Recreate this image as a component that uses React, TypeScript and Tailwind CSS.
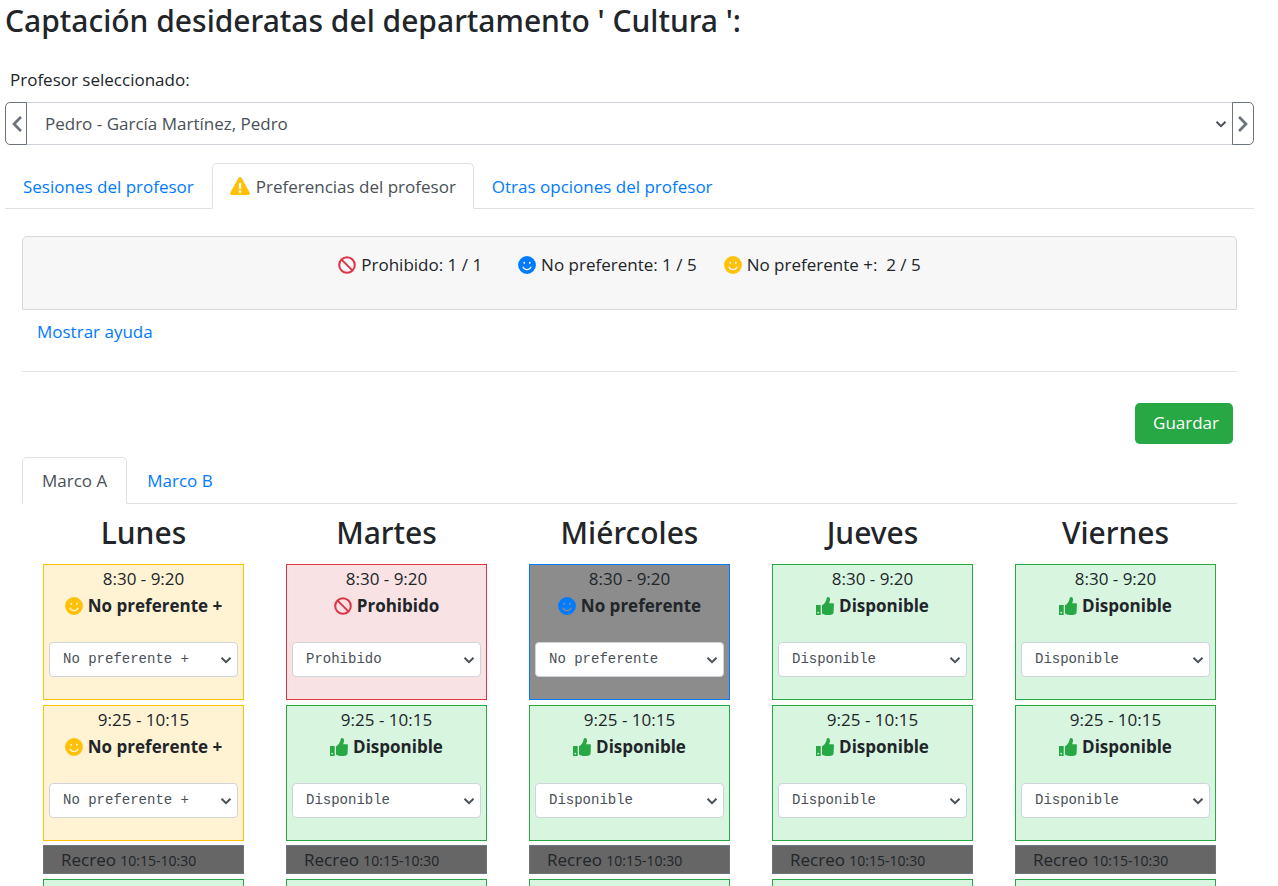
import React, { useState } from 'react';
import { FaChevronLeft, FaChevronRight } from 'react-icons/fa';

type Status = 'Disponible' | 'No preferente' | 'No preferente +' | 'Prohibido';

const STATUSES: Status[] = ['Disponible', 'No preferente', 'No preferente +', 'Prohibido'];

const CARD_STYLE: Record<Status, string> = {
  Disponible: 'border-[#28a745] bg-[#d8f5df]',
  'No preferente': 'border-[#007bff] bg-[#8c8c8c]',
  'No preferente +': 'border-[#ffc107] bg-[#fff3d4]',
  Prohibido: 'border-[#dc3545] bg-[#f9e2e4]',
};

function BanIcon() {
  return (
    <svg viewBox="0 0 18 18" className="inline size-[18px] shrink-0 text-[#dc3545]" fill="none" stroke="currentColor" strokeWidth="2" aria-hidden="true">
      <circle cx="9" cy="9" r="7.8" />
      <path d="M3.6 3.6 14.4 14.4" />
    </svg>
  );
}

function SmileIcon({ className }: { className: string }) {
  return (
    <svg viewBox="0 0 18 18" className={`inline size-[18px] shrink-0 ${className}`} fill="currentColor" fillRule="evenodd" aria-hidden="true">
      <path d="M9 .1a8.900 8.900 0 1 0 0 17.800A8.900 8.900 0 0 0 9 .1zM6.200 5.700a.9 1.100 0 1 1 0 2.200.9 1.100 0 0 1 0-2.200zM11.800 5.700a.9 1.100 0 1 1 0 2.200.9 1.100 0 0 1 0-2.200zM4.700 10.700c.3-.3.8-.2 1 .2.700 1.300 1.900 2 3.300 2s2.600-.7 3.300-2c.2-.4.7-.5 1-.2.3.2.3.5.2.8-.9 1.700-2.500 2.700-4.500 2.700s-3.600-1-4.500-2.700c-.1-.3-.1-.6.2-.8z" />
    </svg>
  );
}

function ThumbIcon() {
  return (
    <svg viewBox="0 0 18 18" className="inline size-[18px] shrink-0 text-[#28a745]" fill="currentColor" fillRule="evenodd" aria-hidden="true">
      <path d="M0 8h4.700v10H0zM2.200 14.700a.9.9 0 1 0 0 1.800.9.9 0 0 0 0-1.800z" />
      <path d="M6 8.300c1.600-.8 3.700-3.300 4.300-5.400.2-1.200.4-2.900 1.700-2.900 1.500 0 2.200 1.500 2 3-.1 1.200-.6 2.200-.9 3.200H16.600c1 0 1.600.8 1.300 1.800l-.3 7c-.1 1.700-1.100 2.700-2.600 2.800-3.500.4-6.500.2-9-1.300z" />
    </svg>
  );
}

function WarningIcon() {
  return (
    <svg viewBox="0 0 20 18" className="inline h-[18px] w-5 shrink-0" aria-hidden="true">
      <path d="M8.300 1.200c.8-1.500 2.700-1.500 3.500 0l7.900 14.200c.6 1.200 0 2.600-1.300 2.600H1.600C.3 18-.3 16.600.3 15.400z" fill="#ffc107" />
      <path d="M8.900 6h2.300v5.700H8.900zM8.900 13.300h2.300v2.400H8.900z" fill="#fff" />
    </svg>
  );
}

function SelectArrow() {
  return (
    <svg viewBox="0 0 12 8" className="pointer-events-none absolute right-[6px] top-1/2 h-2 w-3 -translate-y-1/2 text-[#495057]" fill="none" stroke="currentColor" strokeWidth="2" aria-hidden="true">
      <path d="M1.500 1.800 6 6.200l4.500-4.400" />
    </svg>
  );
}

function StatusIcon({ status }: { status: Status }) {
  if (status === 'Disponible') return <ThumbIcon />;
  if (status === 'Prohibido') return <BanIcon />;
  return <SmileIcon className={status === 'No preferente' ? 'text-[#007bff]' : 'text-[#ffc107]'} />;
}

function SlotCard({ day, time, initial }: { day: string; time: string; initial: Status }) {
  const [status, setStatus] = useState<Status>(initial);
  return (
    <div className={`h-[136px] border px-[5px] ${CARD_STYLE[status]}`}>
      <p>{time}</p>
      <p className="flex items-center justify-center gap-[5px] font-bold">
        <StatusIcon status={status} />
        {status}
      </p>
      <div className="relative mt-[23px]">
        <select
          aria-label={`${day} ${time}`}
          value={status}
          onChange={(e) => setStatus(e.target.value as Status)}
          className="block h-[35px] w-full appearance-none rounded-[4px] border border-[#ced4da] bg-white pl-[13px] pr-6 font-['Liberation_Mono',monospace] text-[14px] text-[#495057]"
        >
          {STATUSES.map((s) => (
            <option key={s}>{s}</option>
          ))}
        </select>
        <SelectArrow />
      </div>
    </div>
  );
}

const DAYS: { name: string; slots: [Status, Status] }[] = [
  { name: 'Lunes', slots: ['No preferente +', 'No preferente +'] },
  { name: 'Martes', slots: ['Prohibido', 'Disponible'] },
  { name: 'Miércoles', slots: ['No preferente', 'Disponible'] },
  { name: 'Jueves', slots: ['Disponible', 'Disponible'] },
  { name: 'Viernes', slots: ['Disponible', 'Disponible'] },
];

const TAB = '-mb-px rounded-t-[5px] border flex items-center gap-1.5';
const TAB_MAIN = 'h-[46px] px-[17px]';
const TAB_SUB = 'h-[47px] px-[19px]';
const TAB_ON = 'border-[#dee2e6] border-b-white bg-white text-[#495057]';
const TAB_OFF = 'border-transparent text-[#007bff]';

export default function App() {
  return (
    <main className="h-screen overflow-hidden bg-white pl-[5px] pr-6 font-['Open_Sans','Noto_Sans',sans-serif] text-[17px] leading-[27px] text-[#212529]">
      <h1 className="font-['Noto_Sans',sans-serif] text-[30px] font-medium leading-[42px]">Captación desideratas del departamento ' Cultura ':</h1>
      <label htmlFor="profesor" className="mt-6 block pl-[5px]">Profesor seleccionado:</label>
      <div className="mt-[9px] flex h-[43px]">
        <button aria-label="Profesor anterior" className="z-10 -mr-px flex w-[22px] items-center justify-center rounded-l-[5px] border border-[#6c757d] pl-0.5 text-[#6c757d]">
          <FaChevronLeft className="size-[18px] shrink-0" />
        </button>
        <div className="relative min-w-0 flex-1">
          <select id="profesor" className="h-full w-full appearance-none border border-[#ced4da] bg-white pl-[18px] pr-8 text-[#495057]">
            <option>Pedro - García Martínez, Pedro</option>
          </select>
          <SelectArrow />
        </div>
        <button aria-label="Profesor siguiente" className="z-10 -ml-px flex w-[22px] items-center justify-center rounded-r-[5px] border border-[#6c757d] text-[#6c757d]">
          <FaChevronRight className="size-[18px] shrink-0" />
        </button>
      </div>

      <nav className="mt-[18px] flex border-b border-[#dee2e6]">
        <a href="#sesiones" className={`${TAB} ${TAB_MAIN} ${TAB_OFF}`}>Sesiones del profesor</a>
        <a href="#preferencias" className={`${TAB} ${TAB_MAIN} ${TAB_ON}`}>
          <WarningIcon />
          Preferencias del profesor
        </a>
        <a href="#otras" className={`${TAB} ${TAB_MAIN} ${TAB_OFF}`}>Otras opciones del profesor</a>
      </nav>

      <section className="ml-[17px] mr-[17px] mt-[27px]">
        <div className="flex h-[74px] justify-center rounded-t-[5px] border border-[#d8d8d8] bg-[#f7f7f7] pt-[14px]">
          <span className="mr-9 flex h-[27px] items-center gap-[5px]"><BanIcon />Prohibido: 1 / 1</span>
          <span className="mr-[27px] flex h-[27px] items-center gap-[5px]"><SmileIcon className="text-[#007bff]" />No preferente: 1 / 5</span>
          <span className="flex h-[27px] items-center gap-[5px] whitespace-pre"><SmileIcon className="text-[#ffc107]" />{'No preferente +:  2 / 5'}</span>
        </div>
        <a href="#ayuda" className="ml-[15px] mt-2 inline-block text-[#007bff]">Mostrar ayuda</a>
        <hr className="mt-[26px] border-[#e5e5e5]" />
        <div className="mr-1 mt-[31px] flex justify-end">
          <button className="h-[41px] rounded-[5px] bg-[#28a745] pb-0.5 pl-[18px] pr-[14px] text-white">Guardar</button>
        </div>

        <nav className="mt-[13px] flex border-b border-[#dee2e6]">
          <a href="#marco-a" className={`${TAB} ${TAB_SUB} ${TAB_ON}`}>Marco A</a>
          <a href="#marco-b" className={`${TAB} ${TAB_SUB} ${TAB_OFF}`}>Marco B</a>
        </nav>

        <div className="grid grid-cols-5 text-center">
          {DAYS.map((day) => (
            <section key={day.name} className="px-[21px]">
              <h2 className="mb-2.5 mt-2 font-['Noto_Sans',sans-serif] text-[30px] font-medium leading-[42px]">{day.name}</h2>
              <div className="space-y-[5px]">
                <SlotCard day={day.name} time="8:30 - 9:20" initial={day.slots[0]} />
                <SlotCard day={day.name} time="9:25 - 10:15" initial={day.slots[1]} />
              </div>
              <p className="mb-[5px] mt-1 h-[29px] border border-[#6c757d] bg-[#666] pl-[17px] text-left">
                Recreo <span className="text-[14px]">10:15-10:30</span>
              </p>
              <div className="h-[136px] border border-[#28a745] bg-[#d8f5df]" />
            </section>
          ))}
        </div>
      </section>
    </main>
  );
}
